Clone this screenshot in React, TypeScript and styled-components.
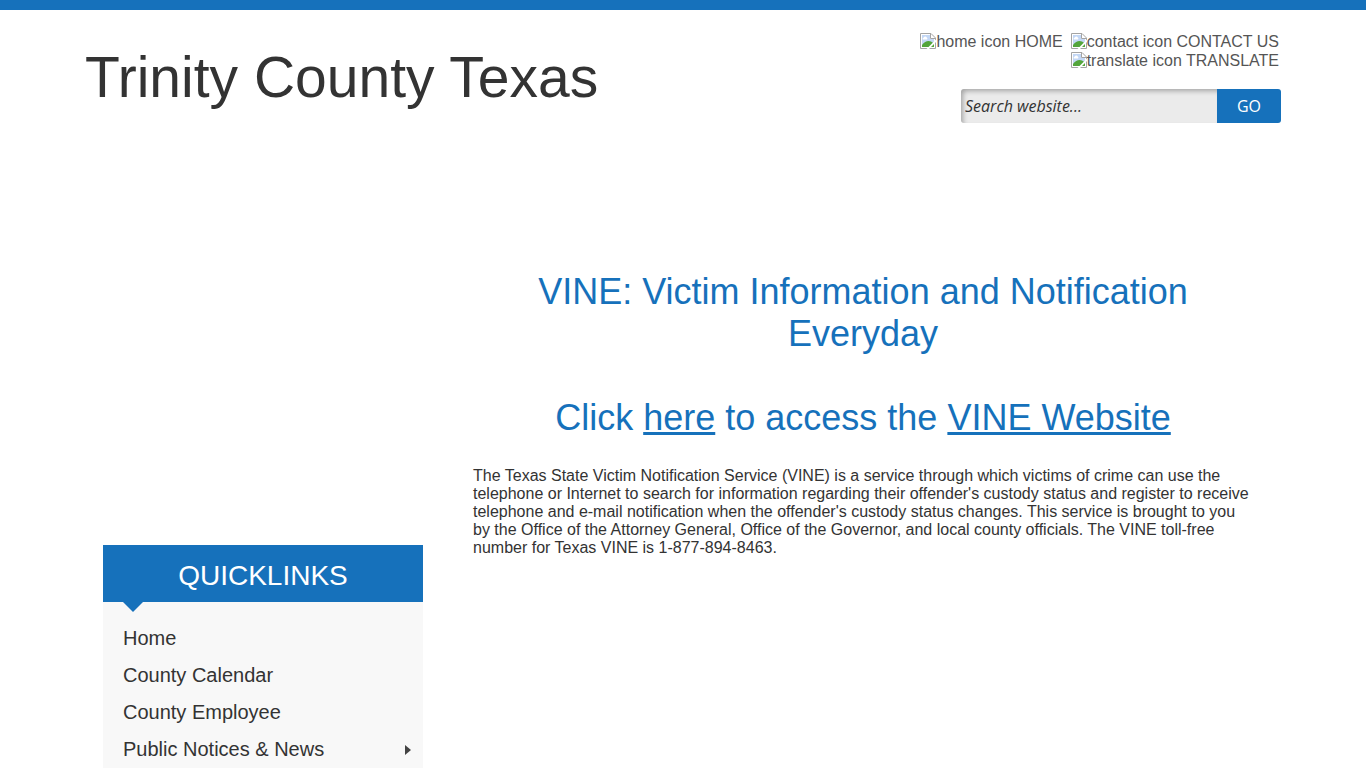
import React from "react";
import styled, { createGlobalStyle } from "styled-components";

const blue = "#1671bb";
const ink = "#333333";

const GlobalStyle = createGlobalStyle`
  *, *::before, *::after { box-sizing: border-box; }
  body {
    margin: 0;
    background: #ffffff;
    color: ${ink};
    font: 16px/18px "Liberation Sans", Arial, sans-serif;
  }
  h1, h2, p, ul { margin: 0; padding: 0; font-weight: 400; }
  a { color: inherit; }
`;

const Page = styled.div`
  display: flex;
  flex-direction: column;
  min-height: 100vh;
  border-top: 10px solid ${blue};
`;

const Container = styled.div`
  width: 100%;
  max-width: 1200px;
  margin: 0 auto;
`;

const Header = styled(Container)`
  display: flex;
  justify-content: space-between;
  align-items: flex-start;
  padding: 22px 2px 0;
`;

const SiteTitle = styled.h1`
  font-size: 57px;
  line-height: 66px;
  padding-top: 12px;
`;

const Tools = styled.div`
  display: flex;
  flex-direction: column;
  align-items: flex-end;
  gap: 19px;
`;

const TopLinks = styled.nav`
  display: flex;
  flex-wrap: wrap;
  justify-content: flex-end;
  column-gap: 8px;
  max-width: 380px;
  padding-right: 2px;
  line-height: 19px;
`;

const TopLink = styled.a`
  display: inline-flex;
  align-items: flex-start;
  color: #555555;
  text-decoration: none;
  white-space: nowrap;
  svg { margin-top: 1px; }
`;

const SearchForm = styled.form`
  display: flex;
  width: 320px;
  height: 34px;
`;

const SearchInput = styled.input`
  flex: 1;
  min-width: 0;
  padding: 0 4px;
  border: 0;
  border-radius: 3px 0 0 3px;
  background: #ebebeb;
  box-shadow: inset 3px 3px 5px -1px rgba(0, 0, 0, 0.3);
  font: italic 16px "Open Sans", "Noto Sans", sans-serif;
  color: ${ink};
  &::placeholder { color: ${ink}; opacity: 1; }
`;

const SearchButton = styled.button`
  width: 64px;
  padding: 0;
  border: 0;
  border-radius: 0 3px 3px 0;
  background: ${blue};
  color: #ffffff;
  font: 16px "Open Sans", "Noto Sans", sans-serif;
`;

const Columns = styled(Container)`
  display: flex;
  flex: 1;
  align-items: stretch;
  gap: 50px;
  padding: 148px 30px 0 20px;
`;

const Sidebar = styled.aside`
  display: flex;
  flex-direction: column;
  flex: 0 0 320px;
  padding-top: 274px;
`;

const SidebarTitle = styled.h2`
  position: relative;
  padding: 15px 0 10px;
  background: ${blue};
  color: #ffffff;
  font-size: 28px;
  line-height: 32px;
  text-align: center;
  &::after {
    content: "";
    position: absolute;
    top: 100%;
    left: 20px;
    border: 10px solid transparent;
    border-top-color: ${blue};
    border-bottom: 0;
  }
`;

const LinkList = styled.ul`
  flex: 1;
  padding-top: 18px;
  background: #f8f8f8;
  list-style: none;
`;

const SideLink = styled.a`
  display: flex;
  align-items: center;
  justify-content: space-between;
  padding: 0 12px 0 20px;
  font-size: 20px;
  line-height: 37px;
  text-decoration: none;
`;

const Article = styled.main`
  flex: 1;
  min-width: 0;
`;

const Heading = styled.h2`
  color: ${blue};
  font-size: 36px;
  line-height: 42px;
  text-align: center;
  margin-bottom: 42px;
`;

const Subheading = styled(Heading)`
  margin-bottom: 28px;
`;

function MissingImage() {
  return (
    <svg width="16" height="16" viewBox="0 0 16 16" aria-hidden="true">
      <path d="M.5.5H11L15.5 5v10.500H.5z" fill="#fff" stroke="#a4a4a4" />
      <path d="M2 2h8v4h4v8H2z" fill="#c3d7f5" />
      <path d="M3 6.500a1.200 1.200 0 0 1 .8-2 1.700 1.700 0 0 1 3.200.4 1 1 0 0 1 0 1.600z" fill="#fff" />
      <path d="M2 14v-2c2.500-3.500 6-5 9-3.500l3 2V14z" fill="#53a53b" />
      <path d="M16 6.500 6.500 16H9l7-7z" fill="#fff" />
      <path d="M10.500 1v4.500H15" fill="none" stroke="#a4a4a4" />
    </svg>
  );
}

const topLinks = ["home icon HOME", "contact icon CONTACT US", "translate icon TRANSLATE"];

const sideLinks = [
  { label: "Home" },
  { label: "County Calendar" },
  { label: "County Employee" },
  { label: "Public Notices & News", nested: true },
];

export default function App() {
  return (
    <Page>
      <GlobalStyle />
      <Header as="header">
        <SiteTitle>Trinity County Texas</SiteTitle>
        <Tools>
          <TopLinks>
            {topLinks.map((label) => (
              <TopLink href="#" key={label}>
                <MissingImage />
                {label}
              </TopLink>
            ))}
          </TopLinks>
          <SearchForm onSubmit={(e) => e.preventDefault()}>
            <SearchInput type="text" aria-label="Search website" placeholder="Search website..." />
            <SearchButton type="submit">GO</SearchButton>
          </SearchForm>
        </Tools>
      </Header>
      <Columns>
        <Sidebar>
          <SidebarTitle>QUICKLINKS</SidebarTitle>
          <LinkList>
            {sideLinks.map(({ label, nested }) => (
              <li key={label}>
                <SideLink href="#">
                  {label}
                  {nested && (
                    <svg width="6" height="10" viewBox="0 0 6 10" aria-hidden="true">
                      <path d="M0 0l6 5-6 5z" fill="#444444" />
                    </svg>
                  )}
                </SideLink>
              </li>
            ))}
          </LinkList>
        </Sidebar>
        <Article>
          <Heading>VINE: Victim Information and Notification Everyday</Heading>
          <Subheading>
            Click <a href="#">here</a> to access the <a href="#">VINE Website</a>
          </Subheading>
          <p>
            The Texas State Victim Notification Service (VINE) is a service through which victims of
            crime can use the telephone or Internet to search for information regarding their
            offender's custody status and register to receive telephone and e-mail notification when
            the offender's custody status changes. This service is brought to you by the Office of
            the Attorney General, Office of the Governor, and local county officials. The VINE
            toll-free number for Texas VINE is 1-877-894-8463.
          </p>
        </Article>
      </Columns>
    </Page>
  );
}
